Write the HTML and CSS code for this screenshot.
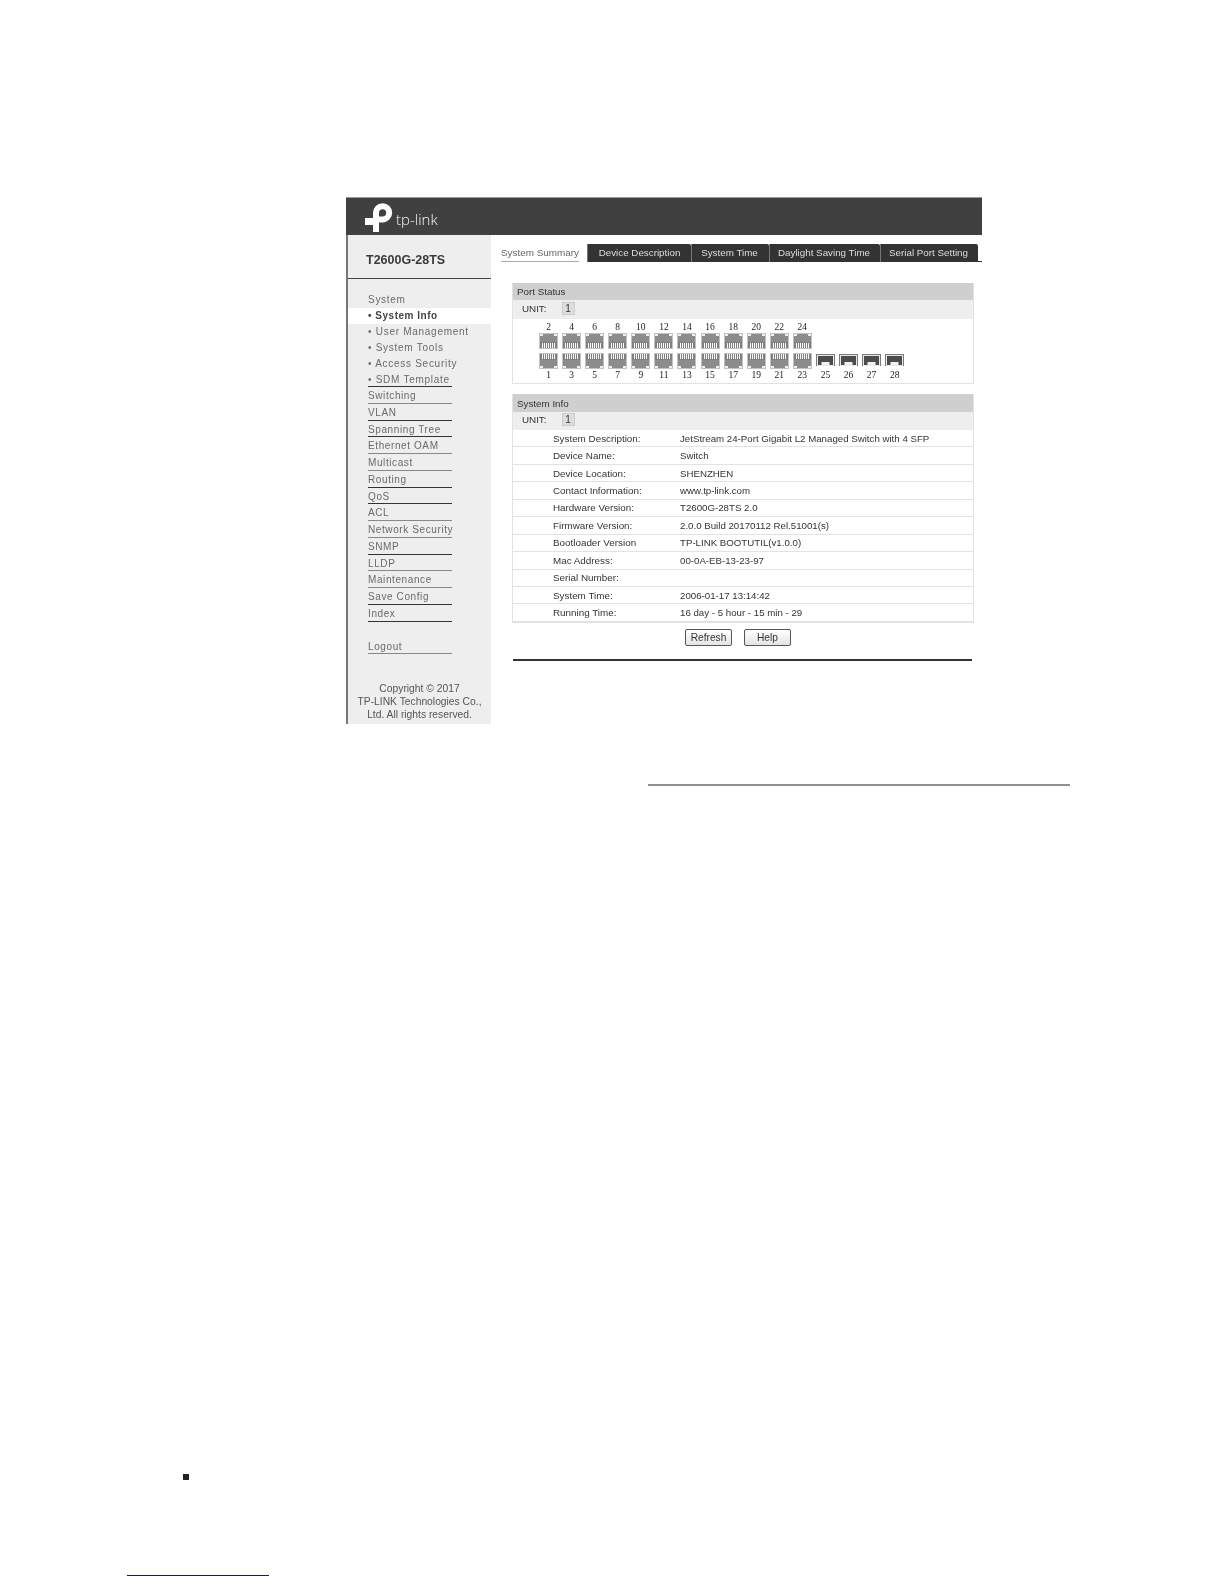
FILE: index.html
```html
<!DOCTYPE html>
<html lang="en">
<head>
<meta charset="utf-8">
<title>System Summary</title>
<link rel="stylesheet" href="styles.css">
</head>
<body>
<svg class="defs" width="0" height="0" aria-hidden="true">
  <symbol id="rj-up" viewBox="0 0 19 16">
    <rect width="19" height="16" fill="#c2c2c2"/>
    <path d="M1 1h3v2h-3zM15 1h3v2h-3z" fill="#f0f0f0"/>
    <path d="M4 1h11v2h3v7H1V3h3z" fill="#8c8c8c"/>
    <rect x="1" y="9" width="17" height="6" fill="#808080"/>
    <path d="M3.500 10v5M5.500 10v5M7.500 10v5M9.500 10v5M11.500 10v5M13.500 10v5M15.500 10v5" stroke="#fafafa" stroke-width="1"/>
  </symbol>
  <symbol id="rj-down" viewBox="0 0 19 16">
    <use href="#rj-up" width="19" height="16" transform="matrix(1 0 0 -1 0 16)"/>
  </symbol>
  <symbol id="sfp" viewBox="0 0 19 12">
    <rect width="19" height="12" fill="#7a7a7a"/>
    <rect x="1" y="1" width="17" height="11" fill="#e8e8e8"/>
    <rect x="2" y="2" width="15" height="9" fill="#4c4c4c"/>
    <rect x="5.500" y="8" width="8" height="3" fill="#f0f0f0"/>
  </symbol>
</svg>

<div class="page">
  <section class="figure">
    <header class="topbar">
      <svg class="logo" viewBox="0 0 28 29" width="28" height="29" aria-label="TP-Link logo">
        <path d="M11 29V9.800A6.600 6.600 0 1 1 17.600 16.400H11" fill="none" stroke="#fff" stroke-width="6"/>
        <rect x="0" y="15" width="9" height="7" fill="#fff"/>
      </svg>
      <span class="brand">tp-link</span>
    </header>
    <div class="body">
      <aside class="side">
        <div class="model">T2600G-28TS</div>
        <nav class="menu">
          <div class="group">System</div>
          <div class="sub current">• System Info</div>
          <div class="sub">• User Management</div>
          <div class="sub">• System Tools</div>
          <div class="sub">• Access Security</div>
          <div class="sub last">• SDM Template</div>
          <div class="item light">Switching</div>
          <div class="item">VLAN</div>
          <div class="item">Spanning Tree</div>
          <div class="item light">Ethernet OAM</div>
          <div class="item light">Multicast</div>
          <div class="item">Routing</div>
          <div class="item">QoS</div>
          <div class="item light">ACL</div>
          <div class="item light">Network Security</div>
          <div class="item">SNMP</div>
          <div class="item light">LLDP</div>
          <div class="item light">Maintenance</div>
          <div class="item">Save Config</div>
          <div class="item">Index</div>
          <div class="item light logout">Logout</div>
        </nav>
        <p class="copy">Copyright © 2017<br>TP-LINK Technologies Co.,<br>Ltd. All rights reserved.</p>
      </aside>
      <main class="main">
        <div class="tabs">
          <div class="tab active"><span>System Summary</span></div>
          <div class="tab t1">Device Description</div>
          <div class="tab t2">System Time</div>
          <div class="tab t3">Daylight Saving Time</div>
          <div class="tab t4">Serial Port Setting</div>
        </div>

        <section class="panel ports-panel">
          <h2 class="ptitle">Port Status</h2>
          <div class="unit"><span>UNIT:</span><b>1</b></div>
          <div class="ports">
            <span>2</span><span>4</span><span>6</span><span>8</span><span>10</span><span>12</span><span>14</span><span>16</span><span>18</span><span>20</span><span>22</span><span>24</span><span></span><span></span><span></span><span></span>
            <svg><use href="#rj-up"/></svg><svg><use href="#rj-up"/></svg><svg><use href="#rj-up"/></svg><svg><use href="#rj-up"/></svg><svg><use href="#rj-up"/></svg><svg><use href="#rj-up"/></svg><svg><use href="#rj-up"/></svg><svg><use href="#rj-up"/></svg><svg><use href="#rj-up"/></svg><svg><use href="#rj-up"/></svg><svg><use href="#rj-up"/></svg><svg><use href="#rj-up"/></svg><i></i><i></i><i></i><i></i>
            <svg><use href="#rj-down"/></svg><svg><use href="#rj-down"/></svg><svg><use href="#rj-down"/></svg><svg><use href="#rj-down"/></svg><svg><use href="#rj-down"/></svg><svg><use href="#rj-down"/></svg><svg><use href="#rj-down"/></svg><svg><use href="#rj-down"/></svg><svg><use href="#rj-down"/></svg><svg><use href="#rj-down"/></svg><svg><use href="#rj-down"/></svg><svg><use href="#rj-down"/></svg><svg class="sf"><use href="#sfp"/></svg><svg class="sf"><use href="#sfp"/></svg><svg class="sf"><use href="#sfp"/></svg><svg class="sf"><use href="#sfp"/></svg>
            <span>1</span><span>3</span><span>5</span><span>7</span><span>9</span><span>11</span><span>13</span><span>15</span><span>17</span><span>19</span><span>21</span><span>23</span><span>25</span><span>26</span><span>27</span><span>28</span>
          </div>
        </section>

        <section class="panel info-panel">
          <h2 class="ptitle">System Info</h2>
          <div class="unit"><span>UNIT:</span><b>1</b></div>
          <dl class="info">
            <div><dt>System Description:</dt><dd>JetStream 24-Port Gigabit L2 Managed Switch with 4 SFP</dd></div>
            <div><dt>Device Name:</dt><dd>Switch</dd></div>
            <div><dt>Device Location:</dt><dd>SHENZHEN</dd></div>
            <div><dt>Contact Information:</dt><dd>www.tp-link.com</dd></div>
            <div><dt>Hardware Version:</dt><dd>T2600G-28TS 2.0</dd></div>
            <div><dt>Firmware Version:</dt><dd>2.0.0 Build 20170112 Rel.51001(s)</dd></div>
            <div><dt>Bootloader Version</dt><dd>TP-LINK BOOTUTIL(v1.0.0)</dd></div>
            <div><dt>Mac Address:</dt><dd>00-0A-EB-13-23-97</dd></div>
            <div><dt>Serial Number:</dt><dd></dd></div>
            <div><dt>System Time:</dt><dd>2006-01-17 13:14:42</dd></div>
            <div><dt>Running Time:</dt><dd>16 day - 5 hour - 15 min - 29</dd></div>
          </dl>
        </section>

        <div class="actions"><button type="button">Refresh</button><button type="button">Help</button></div>
        <hr class="endline">
      </main>
    </div>
  </section>
  <hr class="rule">
  <div class="bullet"></div>
  <hr class="footnote">
</div>
</body>
</html>
```

FILE: styles.css
```css
* { box-sizing: border-box; }
html, body { margin: 0; background: #fff; }
body { font-family: "Liberation Sans", Arial, sans-serif; color: #333; }
.defs { position: absolute; }
.page { width: 1224px; height: 1584px; padding-top: 197px; overflow: hidden; }

.figure { width: 636px; height: 527px; margin-left: 346px; display: flex; flex-direction: column; filter: blur(0.45px); }
.topbar { height: 38px; background: #404040; border-top: 1px solid #999; display: flex; align-items: flex-start; padding: 5px 0 0 19px; flex: none; }
.logo { display: block; }
.brand { font-family: "Open Sans", sans-serif; font-weight: 300; font-size: 15px; line-height: 20px; color: #f4f4f4; margin: 6px 0 0 3px; }
.body { flex: 1; display: flex; min-height: 0; }

.side { width: 145px; background: #eee; border-left: 2px solid #777; flex: none; display: flex; flex-direction: column; }
.model { height: 44px; border-bottom: 1px solid #444; padding: 18px 0 0 18px; font-weight: bold; font-size: 12.500px; line-height: 15px; color: #3a3a3a; }
.menu { margin-top: 13px; font-size: 10px; letter-spacing: 0.720px; color: #6a6a6a; }
.group { height: 16px; line-height: 16px; padding-left: 20px; }
.sub { height: 16px; line-height: 16px; padding-left: 20px; }
.current { background: #fff; color: #444; font-weight: bold; letter-spacing: 0.520px; }
.item, .last { height: 16.770px; line-height: 15px; margin: 0 39px 0 20px; padding-top: 1px; border-bottom: 1px solid #333; white-space: nowrap; }
.item { letter-spacing: 0.600px; }
.sub.last { height: 15px; line-height: 15px; padding: 0; }
.light { border-bottom-color: #888; }
.logout { margin-top: 16px; }
.copy { margin: 29px 0 0; text-align: center; font-size: 10.300px; line-height: 12.800px; color: #555; }

.main { flex: 1; min-width: 0; background: #fff; }
.tabs { display: flex; margin-top: 9px; height: 18px; border-bottom: 1px solid #333; font-size: 9.800px; line-height: 17px; white-space: nowrap; }
.tab { background: #333; color: #ddd; border-left: 1px solid #777; border-top-right-radius: 2px; text-align: center; height: 18px; }
.active { width: 96px; background: #fff; color: #666; border: 0; border-radius: 0; padding-left: 10px; text-align: left; font-size: 9.900px; }
.active span { display: inline-block; height: 18px; border-bottom: 1px solid #aaa; }
.t1 { width: 104px; }
.t2 { width: 78px; padding-right: 2px; }
.t3 { width: 111px; padding-right: 2px; }
.t4 { width: 98px; padding-right: 2px; }

.panel { width: 462px; margin-left: 21px; border: 1px solid #e2e2e2; border-top: 0; }
.ports-panel { margin-top: 21px; height: 101px; }
.info-panel { margin-top: 10px; }
.ptitle { margin: 0; height: 17px; background: #cfcfcf; font-weight: normal; font-size: 9.800px; line-height: 17px; padding-left: 4px; color: #333; }
.info-panel .ptitle { height: 18px; line-height: 20px; }
.unit { height: 19px; background: #eee; display: flex; align-items: center; padding: 0 0 2px 9px; font-size: 9.800px; color: #333; }
.info-panel .unit { height: 18px; padding-bottom: 3px; }
.unit b { margin-left: 15px; width: 13px; height: 13px; background: #ddd; border: 1px solid #ccc; font-weight: normal; font-size: 10px; line-height: 11px; text-align: center; }

.ports { display: grid; grid-template-columns: repeat(16, 23.090px); grid-template-rows: 11px 16px 21px 11px; padding: 3px 0 0 26px; font-family: "Liberation Serif", serif; font-size: 9.500px; line-height: 11px; color: #222; }
.ports span { width: 19px; text-align: center; }
.ports svg { width: 19px; height: 16px; display: block; }
.ports svg:nth-child(n+29) { margin-top: 4px; }
.ports svg.sf { height: 12px; margin-top: 5px; }

.info { margin: 0; color: #333; }
.info div { display: flex; height: 17.450px; align-items: center; border-bottom: 1px solid #e2e2e2; }
.info dt { width: 167px; padding-left: 40px; font-size: 9.850px; }
.info dd { margin: 0; font-size: 9.700px; }

.actions { display: flex; justify-content: flex-start; gap: 12px; margin: 6px 0 0 194px; }
.actions button { width: 47px; height: 17px; padding: 0; border: 1px solid #555; border-radius: 2px; background: linear-gradient(#fff, #e4e4e4); font: 10.200px "Liberation Sans", Arial, sans-serif; color: #333; }
.endline { margin: 13px 0 0 22px; width: 459px; height: 2px; border: 0; background: #333; }

.rule { margin: 60px 0 0 648px; width: 422px; height: 2px; border: 0; background: #909090; }
.bullet { width: 6px; height: 6px; margin: 688px 0 0 183px; background: #222; }
.footnote { margin: 94.500px 0 0 127px; width: 142px; height: 1.500px; border: 0; background: #14147a; }
```
